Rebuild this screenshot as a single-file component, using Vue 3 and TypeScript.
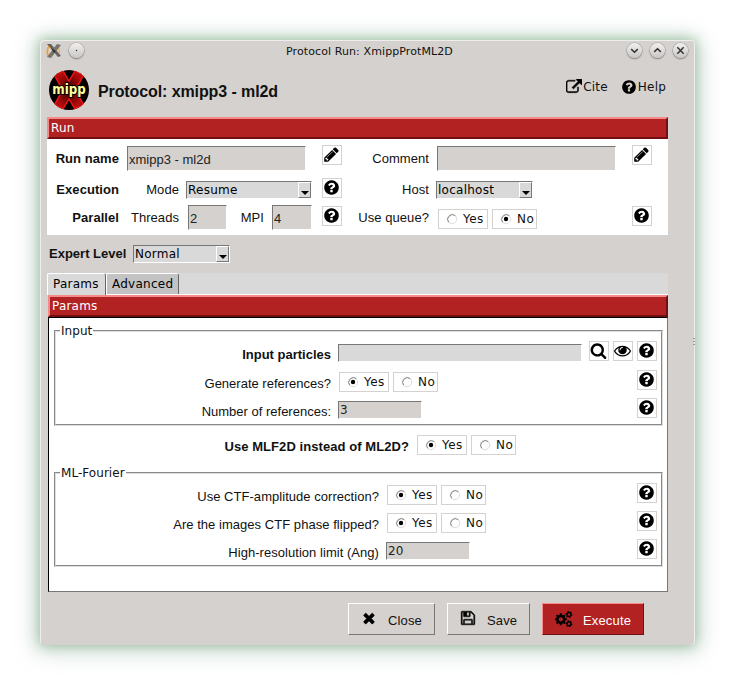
<script setup lang="ts">
import { ref, h, type FunctionalComponent } from 'vue'

const icons: Record<string, string> = {
  help: 'M1024 1376v-192q0-14-9-23t-23-9h-192q-14 0-23 9t-9 23v192q0 14 9 23t23 9h192q14 0 23-9t9-23zm256-672q0-88-55.5-163t-138.5-116-170-41q-243 0-371 213-15 24 8 42l132 100q7 6 19 6 16 0 25-12 53-68 86-92 34-24 86-24 48 0 85.5 26t37.5 59q0 38-20 61t-68 45q-63 28-115.5 86.5t-52.5 125.5v36q0 14 9 23t23 9h192q14 0 23-9t9-23q0-19 21.5-49.5t54.5-49.5q32-18 49-28.5t46-35 44.5-48 28-60.5 12.5-81zm384 192q0 209-103 385.5t-279.5 279.5-385.5 103-385.5-103-279.5-279.5-103-385.5 103-385.5 279.5-279.5 385.5-103 385.5 103 279.5 279.5 103 385.5z',
  pencil: 'M491 1536l91-91-235-235-91 91v107h128v128h107zm523-928q0-22-22-22-10 0-17 7l-542 542q-7 7-7 17 0 22 22 22 10 0 17-7l542-542q7-7 7-17zm-54-192l416 416-832 832h-416v-416zm683 96q0 53-37 90l-166 166-416-416 166-165q36-38 90-38 53 0 91 38l235 234q37 39 37 91z',
  search: 'M1216 832q0-185-131.5-316.5t-316.5-131.5-316.5 131.5-131.5 316.5 131.5 316.5 316.5 131.5 316.5-131.5 131.5-316.5zm512 832q0 52-38 90t-90 38q-54 0-90-38l-343-342q-179 124-399 124-143 0-273.5-55.5t-225-150-150-225-55.5-273.5 55.5-273.5 150-225 225-150 273.5-55.5 273.5 55.5 225 150 150 225 55.5 273.5q0 220-124 399l343 343q37 37 37 90z',
  eye: 'M1664 960q-152-236-381-353 61 104 61 225 0 185-131.5 316.5t-316.5 131.5-316.5-131.5-131.5-316.5q0-121 61-225-229 117-381 353 133 205 333.5 326.5t434.5 121.5 434.5-121.5 333.5-326.5zm-720-384q0-20-14-34t-34-14q-125 0-214.5 89.5t-89.5 214.5q0 20 14 34t34 14 34-14 14-34q0-86 61-147t147-61q20 0 34-14t14-34zm848 384q0 34-20 69-140 230-376.5 368.5t-499.5 138.5-499.5-139-376.5-368q-20-35-20-69t20-69q140-229 376.5-368t499.5-139 499.5 139 376.5 368q20 35 20 69z',
  link: 'M1408 928v320q0 119-84.5 203.5t-203.5 84.5h-832q-119 0-203.5-84.5t-84.5-203.5v-832q0-119 84.5-203.5t203.5-84.5h704q14 0 23 9t9 23v64q0 14-9 23t-23 9h-704q-66 0-113 47t-47 113v832q0 66 47 113t113 47h832q66 0 113-47t47-113v-320q0-14 9-23t23-9h64q14 0 23 9t9 23zm384-864v512q0 26-19 45t-45 19-45-19l-176-176-652 652q-10 10-23 10t-23-10l-114-114q-10-10-10-23t10-23l652-652-176-176q-19-19-19-45t19-45 45-19h512q26 0 45 19t19 45z',
  close: 'M1490 1322q0 40-28 68l-136 136q-28 28-68 28t-68-28l-294-294-294 294q-28 28-68 28t-68-28l-136-136q-28-28-28-68t28-68l294-294-294-294q-28-28-28-68t28-68l136-136q28-28 68-28t68 28l294 294 294-294q28-28 68-28t68 28l136 136q28 28 28 68t-28 68l-294 294 294 294q28 28 28 68z',
  save: 'M512 1536h768v-384h-768v384zm896 0h128v-896q0-14-10-38.5t-20-34.5l-281-281q-10-10-34-20t-39-10v416q0 40-28 68t-68 28h-576q-40 0-68-28t-28-68v-416h-128v1280h128v-416q0-40 28-68t68-28h832q40 0 68 28t28 68v416zm-384-928v-320q0-13-9.5-22.5t-22.5-9.5h-192q-13 0-22.5 9.5t-9.5 22.5v320q0 13 9.5 22.5t22.5 9.5h192q13 0 22.5-9.5t9.5-22.5zm640 32v928q0 40-28 68t-68 28h-1344q-40 0-68-28t-28-68v-1344q0-40 28-68t68-28h928q40 0 88 20t76 48l280 280q28 28 48 76t20 88z',
}
const heavy = ['link', 'save', 'close']

const Glyph: FunctionalComponent<{ name: string }> = (p) =>
  h('svg', { viewBox: '0 0 1792 1792' }, [
    h('path', { d: icons[p.name], fill: '#000', stroke: '#000', 'stroke-width': heavy.includes(p.name) ? 50 : 0 }),
  ])
Glyph.props = ['name']

const Radio: FunctionalComponent<{ value: boolean }> = (p) =>
  h('div', { class: 'radios' }, [true, false].map((v) =>
    h('span', { class: ['radio', v ? 'yes' : 'no'] }, [
      h('svg', { class: 'dot', viewBox: '0 0 12 12' }, [
        h('circle', { cx: 6, cy: 6, r: 4.7, fill: '#fff', stroke: '#ddd', 'stroke-width': 1 }),
        h('path', { d: 'M2.7 9.3A4.7 4.7 0 0 1 9.3 2.7', fill: 'none', stroke: '#888', 'stroke-width': 1 }),
        p.value === v ? h('circle', { cx: 6, cy: 6, r: 2.2, fill: '#000' }) : null,
      ]),
      v ? 'Yes' : 'No',
    ])))
Radio.props = ['value']

function gear(cx: number, cy: number, r: number, inner: number, teeth: number, turn = 0): string {
  const pts: string[] = []
  const step = (Math.PI * 2) / teeth
  for (let i = 0; i < teeth; i++) {
    for (const [o, rad] of [[-0.3, inner], [-0.2, r], [0.2, r], [0.3, inner]]) {
      const a = (i + o) * step + turn
      pts.push(`${(cx + Math.cos(a) * rad).toFixed(2)} ${(cy + Math.sin(a) * rad).toFixed(2)}`)
    }
  }
  const k = inner * 0.45
  return `M${pts.join('L')}ZM${cx - k} ${cy}a${k} ${k} 0 1 0 ${2 * k} 0a${k} ${k} 0 1 0 ${-2 * k} 0Z`
}
const cogs = gear(5.8, 8.3, 6, 4.7, 8) + gear(14, 3.5, 3.5, 2.7, 6, 0.2) + gear(14, 12.8, 3.5, 2.7, 6, 0.2)

const runName = ref('xmipp3 - ml2d')
const comment = ref('')
const threads = ref('2')
const mpi = ref('4')
const particles = ref('')
const references = ref('3')
const limit = ref('20')
</script>

<template>
  <main class="desk">
    <div class="window">
      <header class="titlebar">
        <svg class="xicon" viewBox="0 0 16 16">
          <path d="M4 2Q-1 8 3 14" fill="none" stroke="#f0a030" stroke-width="1.8" />
          <path d="M12 4Q15 8 12 13" fill="none" stroke="#edb45c" stroke-width="1.4" />
          <path d="M1 1H5L15 13L12 14Z" fill="#66635f" /><path d="M11 1L15 2L5 15L1 14Z" fill="#77746f" />
          <path d="M5 5L10 8L8 10Z" fill="#2c2a28" />
        </svg>
        <span class="round pin"><svg viewBox="0 0 16 16"><circle cx="8" cy="8" r=".7" fill="#222" stroke="none" /></svg></span>
        <span class="title">Protocol Run: XmippProtML2D</span>
        <span class="round"><svg viewBox="0 0 16 16"><path d="M4.5 6.5L8 9.8L11.5 6.5" /></svg></span>
        <span class="round"><svg viewBox="0 0 16 16"><path d="M4.5 9.5L8 6.2L11.5 9.5" /></svg></span>
        <span class="round"><svg viewBox="0 0 16 16"><path d="M4.6 4.6L11.4 11.4M11.4 4.6L4.6 11.4" /></svg></span>
      </header>

      <section class="heading">
        <svg class="logo" viewBox="0 0 40 40">
          <defs>
            <clipPath id="disc"><circle cx="20" cy="20" r="20" /></clipPath>
            <radialGradient id="blade"><stop offset="0" stop-color="#300" /><stop offset="1" stop-color="#b80c0c" /></radialGradient>
          </defs>
          <circle cx="20" cy="20" r="20" fill="#050000" />
          <g clip-path="url(#disc)" fill="url(#blade)" stroke="#f41414" stroke-width="1.4">
            <path d="M5.5 5.5L14 1L20 11L26 1L34.5 5.5L28 17V23L34.5 34.5L26 39L20 29L14 39L5.5 34.5L12 23V17Z" />
          </g>
          <text x="20" y="24" text-anchor="middle" textLength="33.5" lengthAdjust="spacingAndGlyphs">mipp</text>
        </svg>
        <h1>Protocol: xmipp3 - ml2d</h1>
        <a class="tool cite"><Glyph name="link" />Cite</a>
        <a class="tool"><Glyph name="help" />Help</a>
      </section>

      <section class="run">
        <h2 class="bar">Run</h2>
        <div class="run-body">
          <div class="row r1">
            <b class="l1">Run name</b>
            <input v-model="runName" class="entry wide sans" />
            <button class="ib"><Glyph name="pencil" /></button>
            <span class="l3">Comment</span>
            <input v-model="comment" class="entry wide" />
            <button class="ib"><Glyph name="pencil" /></button>
          </div>
          <div class="row r2">
            <b class="l1">Execution</b><span class="l2">Mode</span>
            <div class="combo mode"><span>Resume</span><i></i></div>
            <button class="ib"><Glyph name="help" /></button>
            <span class="l3">Host</span>
            <div class="combo host"><span>localhost</span><i></i></div>
          </div>
          <div class="row r3">
            <b class="l1">Parallel</b><span class="l2">Threads</span>
            <input v-model="threads" class="entry tiny sans" />
            <span class="mpi">MPI</span>
            <input v-model="mpi" class="entry tiny sans second" />
            <button class="ib"><Glyph name="help" /></button>
            <span class="l3">Use queue?</span>
            <Radio :value="false" />
            <button class="ib last"><Glyph name="help" /></button>
          </div>
        </div>
      </section>

      <div class="level">
        <b>Expert Level</b>
        <div class="combo lvl"><span>Normal</span><i></i></div>
      </div>

      <nav class="tabs"><span class="tab on">Params</span><span class="tab">Advanced</span></nav>

      <section class="params">
        <h2 class="bar">Params</h2>
        <div class="sheet">
          <fieldset class="input">
            <legend>Input</legend>
            <div class="line a">
              <b>Input particles</b>
              <input v-model="particles" class="entry long" />
              <span class="btns"><button class="ib"><Glyph name="search" /></button><button class="ib eye"><Glyph name="eye" /></button><button class="ib"><Glyph name="help" /></button></span>
            </div>
            <div class="line b">
              <span>Generate references?</span><Radio :value="true" />
              <span class="btns"><button class="ib"><Glyph name="help" /></button></span>
            </div>
            <div class="line c">
              <span>Number of references:</span><input v-model="references" class="entry num" />
              <span class="btns"><button class="ib"><Glyph name="help" /></button></span>
            </div>
          </fieldset>
          <div class="mlf"><b>Use MLF2D instead of ML2D?</b><Radio :value="true" /></div>
          <fieldset class="fourier">
            <legend>ML-Fourier</legend>
            <div class="line b">
              <span>Use CTF-amplitude correction?</span><Radio :value="true" />
              <span class="btns"><button class="ib"><Glyph name="help" /></button></span>
            </div>
            <div class="line b">
              <span>Are the images CTF phase flipped?</span><Radio :value="true" />
              <span class="btns"><button class="ib"><Glyph name="help" /></button></span>
            </div>
            <div class="line c">
              <span>High-resolution limit (Ang)</span><input v-model="limit" class="entry num" />
              <span class="btns"><button class="ib"><Glyph name="help" /></button></span>
            </div>
          </fieldset>
        </div>
      </section>

      <footer class="actions">
        <button class="act close"><Glyph name="close" /><span>Close</span></button>
        <button class="act save"><Glyph name="save" /><span>Save</span></button>
        <button class="act exec"><svg viewBox="0 0 18 16"><path :d="cogs" fill-rule="evenodd" /></svg><span>Execute</span></button>
      </footer>
      <span class="grip"></span>
    </div>
  </main>
</template>

<style>
body { margin: 0; background: #fff; }
</style>

<style scoped>
.desk { width: 735px; height: 685px; padding: 40px; box-sizing: border-box; overflow: hidden; font: 13px/16px "Liberation Sans", Arial, sans-serif; color: #111; }
.desk :deep(*) { box-sizing: border-box; }
.desk :deep(svg) { display: block; flex: none; }
.window { position: relative; width: 655px; height: 605px; background: #d5d1ce; border-radius: 4px; box-shadow: inset 1px 1px 0 #efeeec, inset -1px 0 0 #efeeec, 0 0 12px 1px rgba(95, 160, 100, .5), 0 2px 22px 5px rgba(110, 150, 130, .32); }
.titlebar { display: flex; height: 24px; padding: 3px 7px 0 6px; gap: 8px; }
.xicon { width: 16px; height: 16px; }
.round { width: 15px; height: 15px; border-radius: 50%; background: linear-gradient(#f1f0ef, #c9c6c4); box-shadow: 0 0 0 .6px #a09e9c, 0 1px 1.5px #777; }
.round svg { width: 15px; height: 15px; fill: none; stroke: #333; stroke-width: 1.6; }
.pin { margin-right: auto; margin-left: -1px; }
.title { width: 167px; margin: 1px 166px 0 0; font: 11px/15px "DejaVu Sans", sans-serif; letter-spacing: .1px; white-space: nowrap; }
.heading { display: flex; height: 53px; padding: 6px 29px 0 9px; }
.logo { width: 40px; height: 40px; overflow: visible; }
.logo text { font: bold 14px/20px "DejaVu Sans", sans-serif; fill: #ffff9c; stroke: #000; stroke-width: 2px; paint-order: stroke; }
h1 { margin: 12px auto 0 9px; font: bold 16px/20px "Liberation Sans", Arial, sans-serif; letter-spacing: -.1px; white-space: nowrap; }
.tool { display: flex; height: 16px; margin-top: 9px; font: 12px/16px "DejaVu Sans", sans-serif; gap: 1px; letter-spacing: .2px; }
.tool svg { width: 16px; height: 16px; }
.cite { margin-right: 13px; }
.run { width: 621px; margin-left: 7px; }
.bar { height: 22px; margin: 0; padding: 0 2px; border: 2px solid; border-color: #f58a8a #701012 #701012 #f58a8a; background: #b22222; color: #fff; font: 12px/18px "DejaVu Sans", sans-serif; letter-spacing: .2px; }
.run-body { height: 96px; background: #fff; }
.row { display: flex; align-items: flex-start; }
.r1 { height: 39px; padding-top: 7px; }
.r2 { height: 27px; }
.r3 { height: 30px; }
.row > b, .row > span { line-height: 16px; white-space: nowrap; text-align: right; letter-spacing: .06px; }
.l1 { width: 72px; }
.r1 .l1, .r1 .l3 { margin-top: 5px; }
.r2 .l1, .r2 .l2, .r2 .l3 { margin-top: 4px; }
.r3 .l1, .r3 .l2, .r3 .l3, .r3 .mpi { margin-top: 5px; }
.l2 { width: 60px; }
.l3 { width: 87px; }
.entry { display: block; flex: none; margin: 0; padding: 0 1px; outline: 0; border: 1px solid; border-color: #777 #fff #fff #777; border-radius: 0; background: #d5d1ce; color: #222; font: 12px "DejaVu Sans", sans-serif; }
.sans { padding-top: 2px; font: 13px "Liberation Sans", Arial, sans-serif; }
.wide { width: 179px; height: 25px; margin: 0 0 0 8px; }
.tiny { width: 39px; height: 25px; margin-left: 9px; }
.second { width: 40px; margin-left: 8px; }
.ib { display: flex; flex: none; align-items: flex-start; justify-content: flex-start; width: 20px; height: 20px; margin: 0; padding: 0; border: 1px solid #d5d1ce; background: #fff; }
.ib svg { width: 17px; height: 17px; }
.r1 .ib { margin: -1px 0 0 16px; }
.combo { display: flex; height: 18px; margin: 3px 0 0 7px; border: 1px solid; border-color: #777 #fff #fff #777; background: #d9d9d9; font: 12px/16px "DejaVu Sans", sans-serif; letter-spacing: .25px; color: #000; }
.combo span { flex: 1; padding-left: 1px; }
.combo i { display: flex; width: 13px; height: 16px; border: 1px solid; border-color: #fff #777 #777 #fff; align-items: flex-end; justify-content: center; padding-bottom: 2px; }
.combo i::after { content: ''; border: 4px solid transparent; border-top: 4px solid #000; border-bottom: 0; }
.mode { width: 126px; }
.r2 .ib { margin-left: 10px; }
.host { width: 97px; }
.mpi { width: 37px; }
.r3 .ib { margin: 1px 0 0 10px; }
.r3 :deep(.radios) { margin: 4px 0 0 9px; }
.r3 .last { margin-left: 95px; }
:deep(.radios) { display: flex; gap: 4px; }
:deep(.radio) { display: flex; height: 20px; padding-left: 7px; border: 1px solid #d5d1ce; background: #fff; font: 12px/18px "DejaVu Sans", sans-serif; letter-spacing: .4px; color: #111; }
:deep(.yes) { width: 50px; }
:deep(.no) { width: 45px; }
:deep(.dot) { width: 12px; height: 12px; margin: 3px 5px 0 0; }
.level { display: flex; height: 38px; padding: 10px 0 0 9px; }
.level b { width: 78px; line-height: 18px; white-space: nowrap; }
.level .combo { width: 97px; margin: 0 0 0 6px; }
.tabs { display: flex; width: 621px; height: 22px; margin-left: 7px; background: #d9d9d9; border-bottom: 1px solid #fff; font: 12px/21px "DejaVu Sans", sans-serif; color: #000; }
.tab { height: 21px; width: 73px; padding-left: 5px; letter-spacing: .25px; background: #c3c3c3; border: 1px solid; border-color: #fff #666 transparent #fff; border-bottom: 0; border-radius: 2px 3px 0 0; line-height: 20px; }
.tab.on { width: 59px; height: 22px; background: #d9d9d9; }
.params { width: 620px; height: 297px; margin-left: 8px; }
.sheet { height: 275px; padding: 5px 4px 0 5px; border: 1px solid #000; border-right-color: #777; border-bottom-color: #777; background: #fff; }
fieldset { min-width: 0; margin: 0; padding: 0 4px 0 5px; border: 2px groove #ddd; }
legend { height: 16px; margin-left: -1px; padding: 0 1px; font: 12px/16px "DejaVu Sans", sans-serif; letter-spacing: .05px; }
fieldset.input { height: 103px; }
fieldset.fourier { height: 102px; padding-top: 2px; }
.line { display: flex; }
.line > b, .line > span:first-child { width: 270px; text-align: right; white-space: nowrap; }
.fourier .line > span:first-child { width: 318px; letter-spacing: .04px; }
.btns { display: flex; gap: 4px; margin-left: auto; }
.line.a { height: 31px; padding-top: 2px; }
.a b { margin-top: 6px; }
.long { width: 244px; height: 18px; margin: 3px 0 0 7px; background: #d9d9d9; }
.num { width: 84px; height: 18px; margin: 3px 0 0 7px; }
.line.b { height: 28px; }
.b > span:first-child { margin-top: 6px; }
.b :deep(.radios) { margin: 2px 0 0 8px; }
.c > span:first-child { margin-top: 6px; }
.mlf { display: flex; height: 39px; padding-top: 9px; }
.mlf b { width: 355px; margin-top: 4px; text-align: right; letter-spacing: .07px; }
.mlf :deep(.radios) { margin-left: 8px; }
.actions { display: flex; justify-content: flex-end; gap: 12px; padding: 11px 51px 0 0; }
.act { display: flex; height: 32px; margin: 0; padding: 0 0 0 12px; border: 1px solid; border-color: #fff #777 #777 #fff; border-radius: 0; background: #d5d1ce; font: 13px/32px "Liberation Sans", Arial, sans-serif; letter-spacing: .15px; color: #111; }
.act svg { width: 16px; height: 16px; margin-top: 6px; }
.act span { margin: 1px 0 0 11px; }
.close { width: 87px; }
.save { width: 83px; }
.exec { width: 102px; border-color: #f58a8a #701012 #701012 #f58a8a; background: #b22222; color: #fff; }
.exec svg { width: 18px; margin-top: 7px; }
.exec span { margin-left: 10px; }
.grip { position: absolute; right: 0; top: 298px; width: 2px; height: 9px; background: repeating-linear-gradient(#999 0 1px, transparent 1px 3px); }
</style>
